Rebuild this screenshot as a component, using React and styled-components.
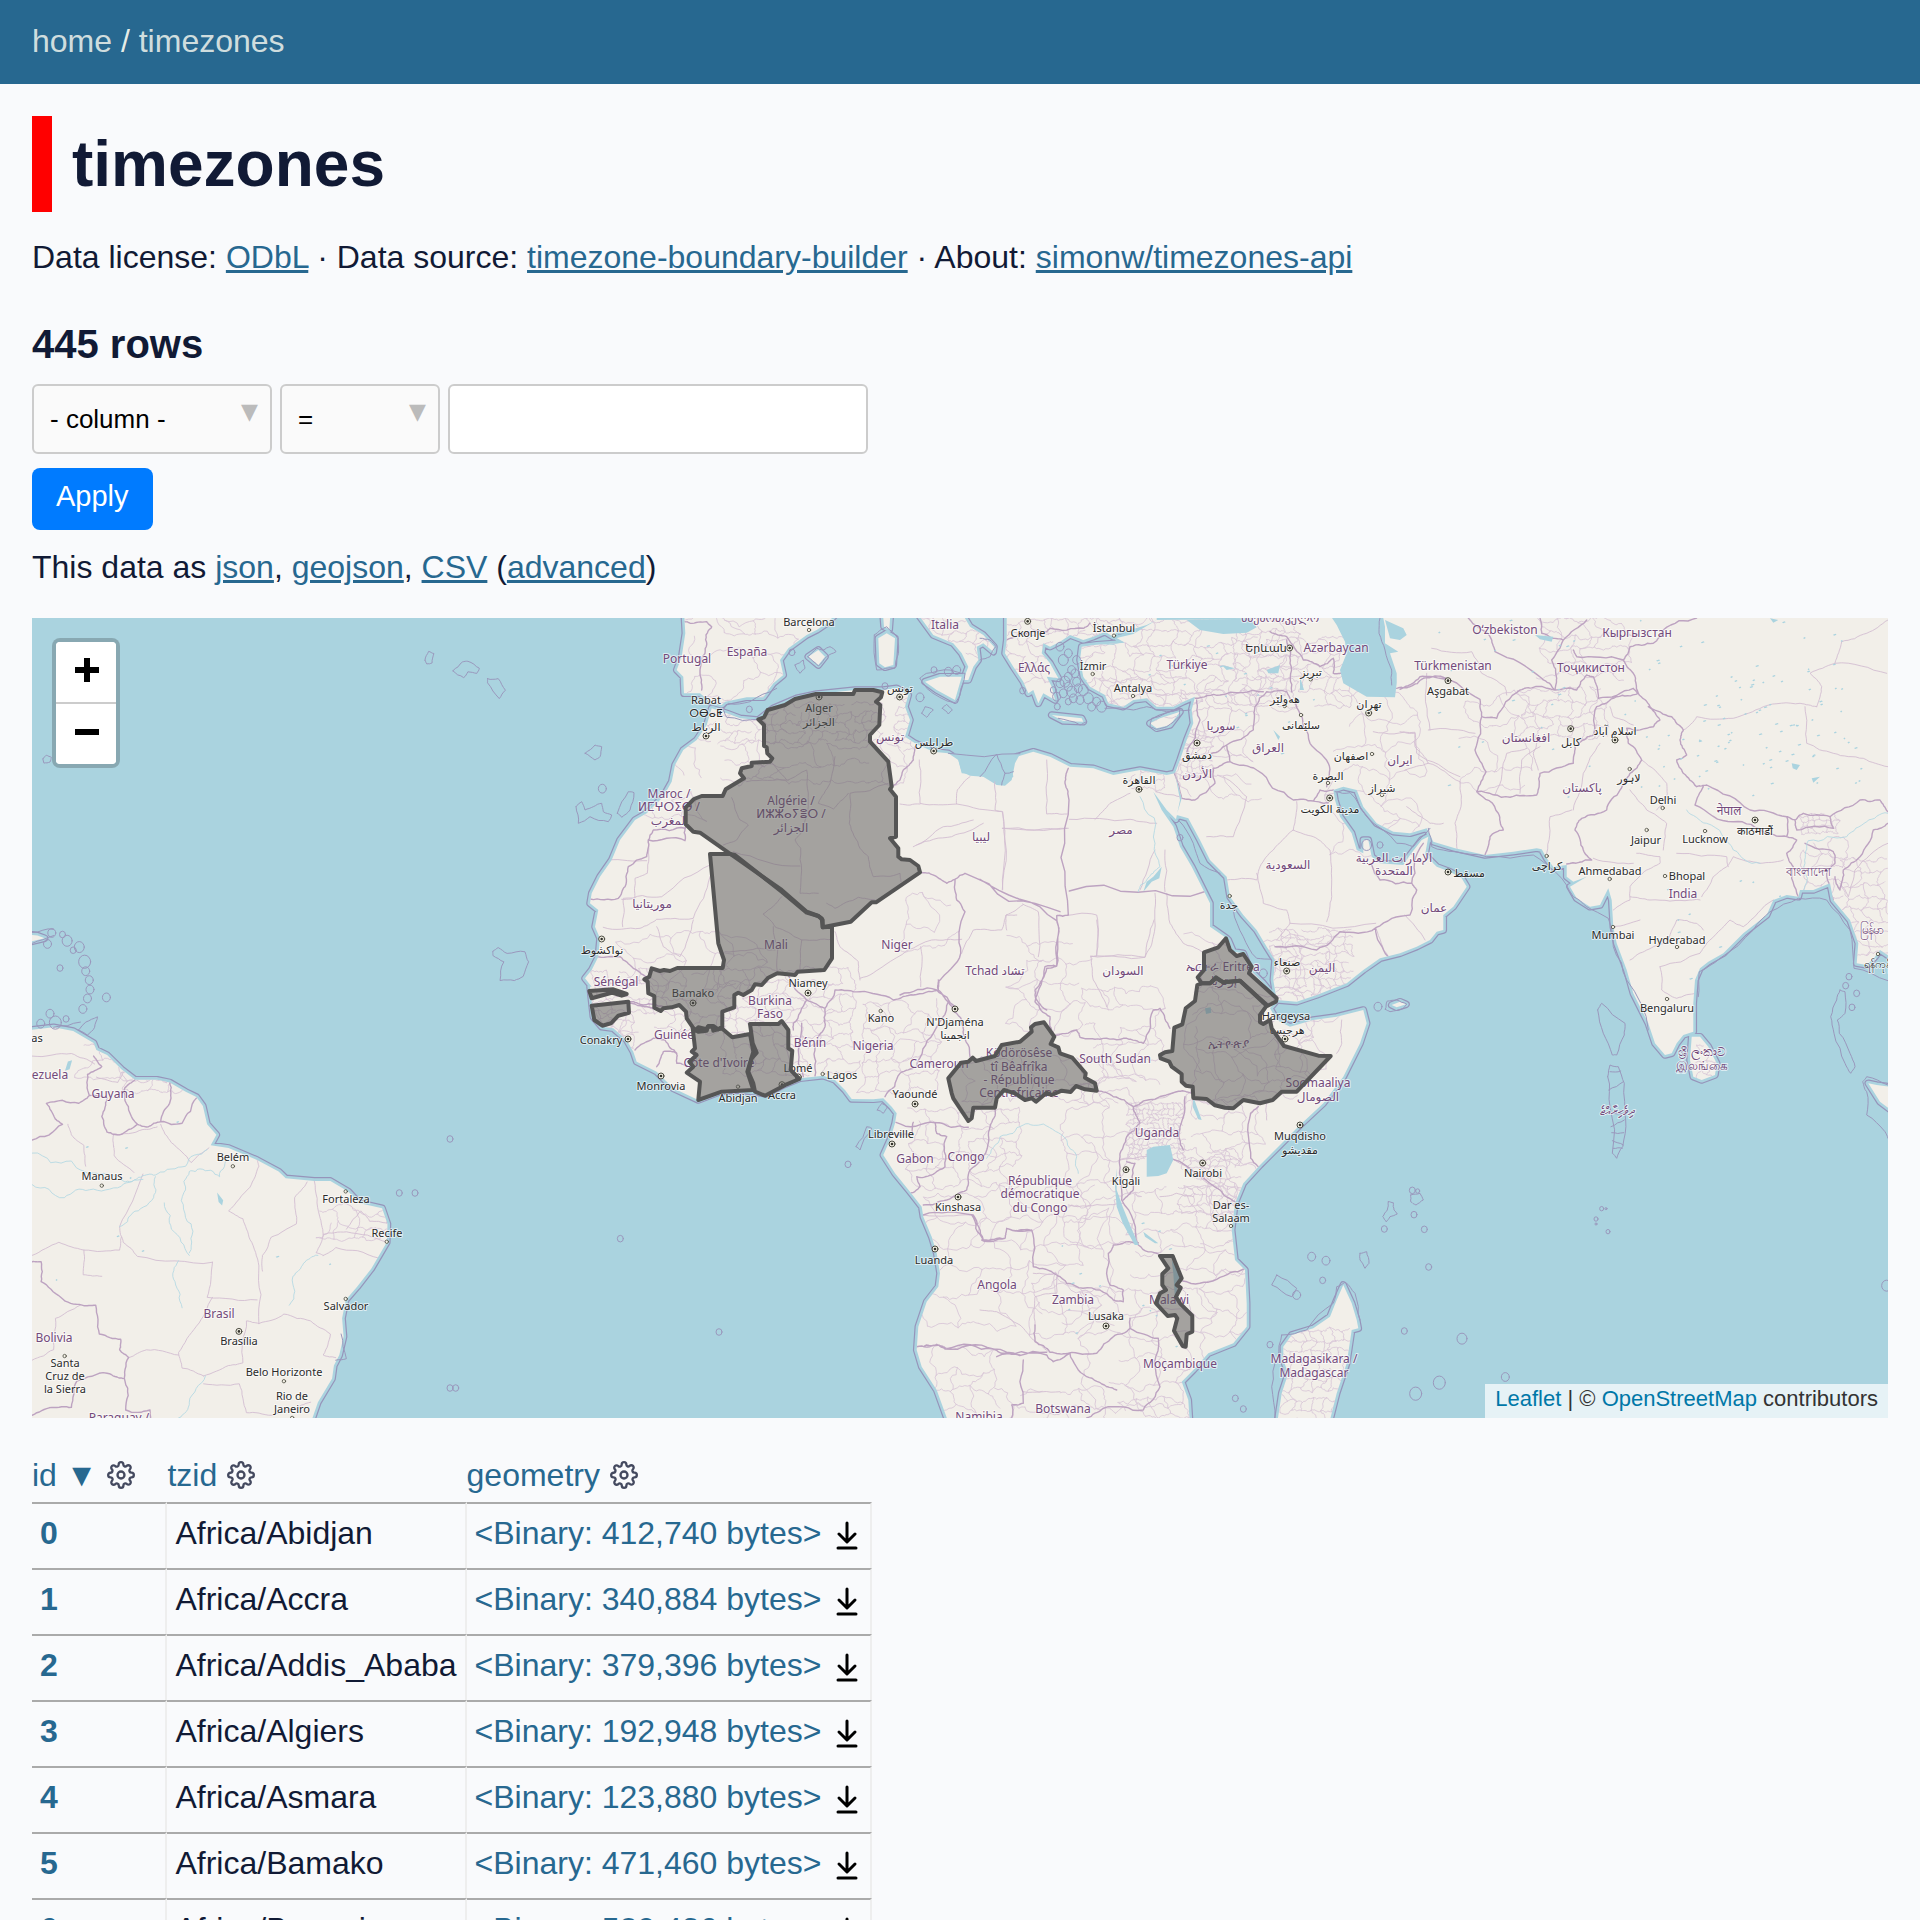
import React from 'react';
import styled, { createGlobalStyle } from 'styled-components';

const GlobalStyle = createGlobalStyle`
  *, *::before, *::after { box-sizing: border-box; }
  html { scrollbar-width: none; }
  body {
    margin: 0;
    background: #f9fafc;
    color: #111a35;
    font-family: "Liberation Sans", Arial, sans-serif;
    font-size: 32px;
    line-height: 48px;
  }
`;

/* ---------- map geometry ---------- */

// Survey sheets: origin on the map plane and units per pixel.
const SHEETS = {
  A: [0, 600, 2.8, 1.9073],
  B: [540, 610, 3, 3],
  C: [540, 920, 3, 3],
  D: [980, 610, 3, 3],
  E: [900, 920, 3, 3],
  F: [1400, 610, 3, 3],
  G: [1380, 920, 3, 3],
};

const place = (sheet, x, y) => {
  const [ox, oy, sx, sy] = SHEETS[sheet];
  return [ox + x / sx, oy + y / sy];
};

const points = (sheet, text) =>
  text.trim().split(/\s+/).map((pair) => {
    const [x, y] = pair.split(',').map(Number);
    return place(sheet, x, y);
  });

const toPath = (list, closed) =>
  'M' + list.map(([x, y]) => `${x.toFixed(1)},${y.toFixed(1)}`).join('L') + (closed ? 'Z' : '');

const shape = (...parts) =>
  toPath(parts.flatMap(([sheet, text]) => points(sheet, text)), true);

const noise = (a, b) => {
  const n = Math.sin(a * 12.9898 + b * 78.233) * 43758.5453;
  return n - Math.floor(n) - 0.5;
};

// Midpoint displacement, so that borders follow a natural, uneven line.
const roughen = (list, amount, depth) => {
  let line = list;
  for (let pass = 0; pass < depth; pass += 1) {
    const next = [line[0]];
    for (let i = 1; i < line.length; i += 1) {
      const [x0, y0] = line[i - 1];
      const [x1, y1] = line[i];
      const shift = noise(x0 + y1, y0 + x1) * amount;
      next.push([(x0 + x1) / 2 - (y1 - y0) * shift, (y0 + y1) / 2 + (x1 - x0) * shift]);
      next.push(line[i]);
    }
    line = next;
  }
  return line;
};

// Irregular province cells over a rectangle.
const provinces = ([x, y, w, h, size]) => {
  const cols = Math.round(w / size);
  const rows = Math.round(h / size);
  const node = (r, c) => [
    x + (c + (r % 2 ? 0.5 : 0)) * size + noise(r + x, c + y) * size * 0.6,
    y + r * size + noise(c + x + 7, r + y + 3) * size * 0.6,
  ];
  const parts = [];
  for (let r = 0; r <= rows; r += 1) {
    for (let c = 0; c <= cols; c += 1) {
      if (c < cols && noise(r * 3 + x, c * 5 + y) > -0.4) {
        parts.push(toPath(roughen([node(r, c), node(r, c + 1)], 0.45, 3)));
      }
      if (r < rows && noise(r * 7 + y, c * 2 + x) > -0.2) {
        parts.push(toPath(roughen([node(r, c), node(r + 1, c)], 0.45, 3)));
      }
    }
  }
  return parts.join('');
};

const LAND = [
  shape(['A', '60,822 150,815 205,822 262,845 270,858 300,868 340,895 378,915 440,915 475,920 520,938 550,948 568,965 580,1000 606,1020 590,1040 640,1045 720,1068 780,1090 800,1103 880,1108 925,1108 975,1128 1005,1150 1070,1160 1085,1190 1083,1225 1040,1275 1000,1310 968,1335 958,1370 962,1405 950,1440 935,1460 930,1485 890,1530 860,1590 60,1590']),
  shape(['B', '432,0 436,70 425,140 410,180 430,200 432,250 480,250 510,275 545,285 555,275 620,262 670,262 700,220 730,195 720,150 745,115 800,75 830,60 860,40 900,0']),
  shape(['B', '1015,85 1040,70 1065,85 1060,165 1035,172 1018,160']),
  shape(['B', '1028,0 1052,0 1048,58 1032,50']),
  shape(['B', '1125,0 1180,75 1240,100 1265,130 1285,170 1270,210 1285,210 1300,170 1315,150 1310,110 1330,100 1360,125 1362,110 1330,75 1290,50 1260,0']),
  shape(['B', '1155,215 1200,200 1265,200 1245,270 1190,240']),
  shape(['B', '805,140 835,120 855,140 835,165']),
  shape(['D', '80,0 80,90 75,130 100,170 130,215 145,250 160,240 175,280 190,250 225,270 215,230 200,200 235,205 210,160 185,130 190,100 210,110 240,95 270,75 310,90 340,80 375,65 400,80 410,66 450,60 500,45 530,30 530,0']),
  shape(
    ['D', '530,30 460,72 410,84 435,98 350,104 305,110 300,150 310,200 330,230 375,255 385,280 430,290 460,270 500,265 530,290 580,290 610,275 645,260 635,300 640,340 620,390 600,450 585,490 605,565 590,615 625,625 660,690 690,750 740,800 750,860 790,915 830,960 860,1010 885,1050 880,1110 890,1170 950,1175 1010,1155 1100,1120 1150,1080 1200,1045 1260,1030 1310,1010 1350,990 1370,965 1390,960 1390,915 1420,890 1460,830 1445,805 1410,785 1370,770 1335,735 1345,680 1325,690 1290,735 1270,765 1200,760 1175,740 1165,690 1150,690 1150,730 1130,720 1115,670 1080,620 1065,570 1060,540 1090,530 1130,540 1150,590 1190,640 1240,665 1290,670 1340,655 1360,695'],
    ['F', '165,715 255,735 340,725 410,715 425,718 440,745 460,770 500,765 500,800 520,815 560,800 510,830 530,865 570,890 600,885 625,835 635,870 640,950 650,1000 680,1080 700,1150'],
    ['G', '765,230 805,310 825,370 855,405 875,400 890,370 910,345 940,335 940,250 945,180 960,145 985,125'],
    ['F', '970,1030 1030,970 1100,915 1120,870 1160,855 1195,860 1200,840 1240,840 1290,820 1300,870 1350,930 1375,1000 1370,1060 1400,1065 1425,1040 1440,1020 1500,1060 1500,0'],
  ),
  shape(
    ['B', '515,295 500,345 470,390 430,420 405,465 395,515 370,560 320,610 285,630 240,690 215,750 180,800 155,850 150,880 175,900 165,950 180,985 175,1040 155,1080 135,1105 155,1130'],
    ['C', '150,200 160,290 185,320 220,325 260,360 280,395 290,425 350,455 400,505 475,540 540,515 590,510 640,515 680,522 730,495 780,475 850,467 885,480 915,510 935,537 1000,538 1030,535 1055,560 1070,580 1065,610 1050,660 1030,705 1065,760 1110,815 1145,860 1150,890 1175,950 1190,1000 1200,1060 1195,1100 1160,1145 1135,1220 1130,1290 1145,1340 1190,1410 1230,1520'],
    ['E', '870,1520 865,1440 845,1385 880,1350 925,1300 1000,1270 1040,1220 1040,1150 1035,1050 1005,1020 995,930 1005,850 1030,790 1080,735 1200,615 1270,550 1330,470 1380,370 1400,310 1390,270 1310,290 1240,300 1170,320 1130,300 1110,265 1130,240 1090,190 1050,150 1030,100 1000,95 985,60'],
    ['D', '740,985 690,950 690,880 660,820 635,770 600,710 580,650 545,600 520,545 560,600 588,628 600,570 585,490 560,495 480,480 400,495 340,475 270,470 210,440 160,425 110,440 95,470 100,500 70,525 0,495'],
    ['B', '1265,490 1255,450 1225,430 1180,425 1125,400 1095,380 1110,330 1095,290 1105,255 1070,235 1030,240 945,240 830,252 770,265 700,295 655,330 600,325 560,310'],
  ),
  shape(['G', '935,350 960,350 985,380 1010,430 1005,465 965,480 940,470 930,420']),
  shape(['E', '1330,1095 1355,1150 1370,1200 1375,1225 1355,1230 1340,1330 1310,1420 1285,1520 1130,1520 1145,1420 1165,1360 1150,1320 1150,1280 1175,1245 1240,1225 1290,1190 1310,1140']),
  shape(['D', '510,340 540,325 600,305 570,345 530,355']),
  shape(['D', '215,315 305,325 310,335 250,333']),
  shape(['G', '35,255 60,245 78,253 50,262']),
  shape(['G', '1465,490 1490,495 1560,505 1560,590 1500,545']),
  shape(['A', '60,636 105,640 125,645 60,656']),
].join('');

const WATER = [
  shape(['D', '1040,0 1070,45 1095,95 1100,130 1080,180 1090,220 1160,260 1245,262 1250,220 1250,190 1230,130 1255,125 1215,100 1215,50 1205,0']),
  shape(['D', '1215,30 1270,55 1280,75 1260,90 1230,85']),
  shape(['D', '535,0 535,30 620,30 660,60 730,72 800,68 830,52 790,0']),
  shape(['D', '340,92 400,84 430,95 400,104 345,102']),
  shape(['E', '740,690 760,680 810,675 820,720 800,760 775,768 740,770']),
  shape(['E', '650,745 650,810 668,860 690,915 716,975 704,975 668,910 650,860 645,800']),
  shape(['E', '730,935 775,970 765,970 735,950']),
  shape(['E', '815,1020 845,1075 830,1095 835,1140 825,1140 820,1060']),
  shape(['E', '880,530 905,600 895,598 878,560']),
  shape(['E', '915,265 932,262 934,278 918,282']),
  shape(['D', '860,180 900,165 895,190 865,190']),
  shape(['D', '960,200 972,240 960,240']),
  shape(['D', '725,165 765,175 740,180']),
  shape(['D', '520,800 545,770 538,805 515,815 490,845 500,815']),
  shape(['F', '405,75 460,80 455,95 420,88']),
  shape(['F', '1110,25 1135,30 1120,38']),
  shape(['F', '1175,460 1200,465 1190,480 1178,475']),
  shape(['F', '1235,505 1260,500 1240,518']),
  shape(['A', '190,880 202,878 195,895 182,898']),
  shape(['A', '608,1130 625,1145 622,1155 612,1148']),
  shape(['D', '880,360 900,380 895,390']),
].join('');

const GULF = shape(['B', '1240,430 1440,431 1425,460 1415,510 1395,527 1370,525 1330,500 1290,497 1265,485 1255,450']);

const RIVERS = [
  ['A', '580,1048 520,1080 440,1095 400,1098 350,1110 280,1095 200,1070 90,1055'],
  ['A', '400,1105 340,1118 250,1125 180,1140 90,1115'],
  ['A', '640,1060 615,1100 560,1085 530,1090 515,1130 535,1190 530,1245'],
  ['A', '460,1150 480,1200 530,1250'],
  ['A', '435,1100 430,1140 370,1170 335,1195'],
  ['A', '890,1250 850,1265 820,1290 810,1345'],
  ['A', '575,1480 530,1530 500,1560'],
  ['A', '500,1260 490,1300 510,1350'],
  ['E', '260,715 300,650 370,615 430,612 500,660 530,710 535,760'],
  ['D', '475,845 500,810 540,770 525,700 480,560'],
  ['F', '1464,610 1400,635 1340,680 1225,692 1215,760 1215,850'],
  ['F', '860,600 920,640 1000,720 1080,760'],
].map(([s, t]) => toPath(roughen(points(s, t), 0.3, 3))).join('');

const LAKES = [
  [1430, 620, 440, 180, 60], [1640, 700, 220, 90, 60], [1690, 670, 150, 20, 8],
  [1220, 680, 120, 90, 8], [1080, 640, 180, 60, 14], [50, 900, 300, 450, 22],
  [1060, 1220, 120, 140, 14], [1640, 860, 140, 120, 12],
].flatMap(([x, y, w, h, n]) =>
  Array.from({ length: n }, (_, i) => {
    const cx = x + (noise(i, x) + 0.5) * w;
    const cy = y + (noise(y, i + 3) + 0.5) * h;
    const r = 1 + (noise(i, i + 9) + 0.5) * 2;
    return `M${cx.toFixed(1)},${cy.toFixed(1)}l${r.toFixed(1)},-1l1,1l-${r.toFixed(1)},1Z`;
  })).join('');

const STATE_LINES = [
  ['B', '325,692 322,790 285,805 285,865 245,868'],
  ['B', '205,750 320,752'], ['B', '510,765 365,860 250,865 248,950'],
  ['B', '190,952 300,955 350,928 460,925 510,800'], ['B', '460,930 420,1040 370,1010 350,950'],
  ['B', '1138,450 1140,580 1250,582 1252,540 1290,500'], ['B', '1080,582 1140,582'],
  ['B', '1250,582 1387,605 1387,840'], ['B', '1387,655 1580,655'], ['B', '1120,710 1210,650 1300,630'],
  ['B', '1130,705 1235,680 1330,640'], ['B', '885,965 900,1010 955,1055 960,1110'],
  ['B', '960,1105 1035,1065 1175,990 1265,988'], ['B', '1142,1010 1142,1130'],
  ['B', '1265,1030 1300,960 1385,960 1398,915 1430,915'],
  ['B', '745,510 620,515 605,505'], ['B', '745,510 800,480 805,590 790,660 765,690 782,715 780,850 835,850'],
  ['B', '780,768 580,725'], ['B', '1045,520 930,550 928,640 960,715 985,740 1000,800 1080,790 1083,815'],
  ['B', '575,563 600,630 625,645 590,690 550,705'], ['B', '690,450 740,510'], ['B', '885,440 870,520 835,580 880,597 925,550'],
  ['B', '670,912 725,860'], ['B', '670,912 705,950 740,965 785,990 876,988'], ['B', '700,950 712,1085'],
  ['B', '785,990 780,1080'], ['B', '555,1025 650,1015 705,1020'], ['B', '860,880 885,895 955,862 1005,870'],
  ['D', '45,500 45,600 68,605 68,838'], ['D', '68,655 265,655'], ['D', '200,450 200,612 262,612'],
  ['D', '268,628 450,628 530,640'], ['D', '345,628 390,580 450,550'], ['D', '555,720 555,845'],
  ['D', '527,545 600,560'], ['D', '525,720 480,840'], ['D', '128,882 175,905 175,1040'], ['D', '80,960 78,915 128,885'],
  ['D', '232,915 350,915 350,1035'], ['D', '333,1040 495,1042 520,980 525,850'], ['D', '333,1040 340,1110 380,1190'],
  ['D', '560,850 570,940 610,1000 665,1025'], ['D', '930,940 1187,940'], ['D', '1040,935 1055,860 1050,720 1000,680 940,660'],
  ['D', '940,660 880,720 840,770 830,810 740,810'], ['D', '680,680 760,680 800,560 730,500'],
  ['D', '950,575 940,660'], ['D', '830,790 850,880 920,900 930,940 890,990'],
  ['D', '1187,955 1225,1040'], ['D', '1275,915 1335,990'], ['D', '1180,365 1305,367 1310,430 1440,500'],
  ['F', '0,365 45,370 45,410 85,460 180,515 180,600 165,640 172,720'], ['F', '15,480 85,460'],
  ['F', '20,590 90,640 130,640'], ['F', '85,360 225,370'], ['F', '80,190 90,360'],
  ['F', '95,115 215,125 245,190 315,230 320,255'], ['F', '285,555 320,430 380,415'], ['F', '360,550 365,450 420,410'],
  ['F', '410,400 400,430 415,480'], ['F', '600,400 550,490 520,600'], ['F', '515,600 450,620 440,730'],
  ['F', '1464,30 1400,70 1325,95 1305,160 1230,190 1265,230 1250,290'],
  ['F', '1305,160 1460,190'], ['F', '850,360 890,320 1000,325 1090,290 1200,280 1250,290'],
  ['F', '1215,290 1220,400 1300,430 1390,445 1464,470'],
  ['F', '640,950 720,930'], ['F', '690,860 750,870 870,870 900,870'], ['F', '905,860 940,800 980,770 1000,740 1080,760 1150,750'],
  ['F', '640,900 690,870 690,830 740,780 780,760 780,740 710,730'], ['F', '690,540 740,600 800,640 790,720'],
  ['F', '580,745 700,760'], ['F', '830,730 980,740 985,770'], ['F', '780,1070 900,1030 920,1000'],
  ['F', '780,1070 785,1140 830,1165 890,1150'], ['F', '690,1050 740,1020 800,1000 830,930 890,940 910,960'],
  ['F', '920,1000 990,930 1030,950 1120,870'], ['F', '725,450 800,520 800,560 770,600'],
  ['F', '1320,820 1345,860 1365,780 1464,700'], ['F', '630,290 640,320 700,345'],
  ['A', '400,1095 335,1195 345,1225 385,1252 595,1263'], ['A', '90,1250 165,1225 235,1240 335,1240 340,1215'],
  ['A', '235,1240 233,1287 285,1290'], ['A', '240,1080 235,1040 200,1020 190,1000'], ['A', '318,1042 318,1020 400,1010 440,1005'],
  ['A', '318,1042 320,1060 375,1092'], ['A', '450,1000 480,1035 535,1073 585,1045'],
  ['A', '595,1263 580,1330 720,1335'], ['A', '720,1065 725,1080 700,1120 640,1165 680,1180 700,1220 725,1270 725,1380'],
  ['A', '880,1108 895,1175 905,1210 885,1245 905,1250'], ['A', '860,1110 825,1140 830,1190 760,1215 735,1250 735,1280'],
  ['A', '905,1210 970,1205 1085,1225'], ['A', '970,1200 1010,1165 1035,1185 1085,1188'], ['A', '905,1250 940,1235 1060,1255'],
  ['A', '725,1380 795,1362 870,1375 925,1400 905,1440 940,1445'], ['A', '595,1330 550,1385 500,1435 510,1465 570,1480'],
  ['A', '570,1480 640,1460 680,1455 690,1375 725,1380'], ['A', '360,1445 410,1430 500,1440'], ['A', '570,1495 670,1495 690,1550 760,1555 820,1545 870,1530'],
  ['A', '90,870 200,865 265,885'], ['A', '90,1450 150,1430 155,1370 225,1345'], ['A', '270,910 330,920 345,900'],
  ['E', '590,0 590,108 572,110'], ['E', '572,108 735,112 762,0'], ['E', '505,855 620,855 670,850'],
  ['E', '1050,580 1075,560'], ['E', '1325,300 1325,370 1310,400'], ['E', '1100,550 1100,600'],
  ['E', '70,885 215,885'], ['E', '240,1170 290,1175 360,1215 400,1260 445,1295'], ['E', '470,1070 470,1120 405,1130 405,1215'],
  ['E', '370,1415 480,1415'], ['E', '470,1060 400,1060'], ['E', '690,1195 790,1170'], ['E', '780,830 830,820 880,830'],
  ['E', '660,720 820,718 960,810'], ['E', '830,515 760,540 700,560'],
].map(([s, t]) => toPath(roughen(points(s, t), 0.12, 3))).join('');

const PROVINCES = [
  [700, 705, 180, 36, 9], [690, 615, 100, 80, 20], [560, 750, 140, 60, 22], [720, 745, 180, 30, 18],
  [895, 700, 16, 50, 7], [900, 620, 100, 40, 12], [1005, 620, 70, 60, 12], [1075, 620, 220, 80, 12],
  [1180, 690, 70, 110, 22], [1230, 640, 120, 60, 13], [1330, 695, 90, 160, 26], [1180, 730, 30, 50, 6],
  [1130, 765, 30, 20, 8], [1520, 690, 80, 50, 12], [1540, 620, 90, 60, 14],
  [590, 970, 140, 60, 15], [570, 1010, 60, 60, 12], [720, 970, 130, 110, 13], [620, 935, 120, 60, 26],
  [860, 1000, 80, 90, 15], [900, 900, 60, 60, 26], [910, 1110, 110, 80, 15], [960, 1060, 150, 30, 20],
  [1010, 940, 60, 90, 22], [1080, 990, 80, 90, 18], [920, 1190, 170, 140, 26], [1060, 1090, 60, 150, 22],
  [1127, 1104, 54, 56, 5], [1190, 1100, 60, 60, 16], [1180, 1150, 50, 60, 9], [1130, 1190, 110, 80, 20],
  [1080, 1290, 110, 110, 24], [1030, 1280, 50, 60, 26], [930, 1350, 60, 60, 20], [1000, 1390, 100, 30, 20],
  [1280, 1330, 70, 90, 10], [1190, 940, 130, 120, 26], [1270, 930, 80, 70, 8],
  [1205, 1160, 40, 200, 22], [1800, 815, 34, 16, 6], [1800, 840, 40, 60, 14], [1840, 860, 48, 100, 12],
  [1695, 1045, 30, 40, 9], [1120, 1400, 60, 20, 15], [465, 1060, 60, 20, 15],
  [120, 1070, 60, 20, 10], [320, 1210, 70, 30, 15], [80, 1045, 60, 30, 18], [1100, 680, 90, 30, 18],
  [1460, 700, 70, 80, 22], [1190, 1010, 110, 90, 22],
].map(provinces).join('');

const COUNTRY_LINES = [
  ['B', '432,34 450,40 500,35 515,50 498,75 495,130 480,180 485,240'],
  ['B', '325,690 435,692 437,645'], ['B', '325,690 340,660 435,655'],
  ['B', '325,690 320,740 265,770 255,830 235,865 150,867'], ['B', '165,1040 240,1040 280,1075 325,1110'],
  ['B', '1125,410 1120,450 1090,480 1080,510 1055,530'], ['B', '1142,787 1190,800 1220,820 1245,808 1275,790 1560,905'],
  ['B', '1245,808 1250,870 1275,905 1262,1030 1195,1115 1195,1140'],
  ['C', '745,165 800,240 855,265 885,210 960,215 1060,240 1120,225 1195,210 1195,180'],
  ['C', '855,265 855,320 825,380 825,468'], ['C', '800,240 760,310 760,330'], ['C', '785,310 790,470'],
  ['C', '1195,210 1225,245 1180,340 1130,440 1080,460 1035,530'], ['C', '1225,245 1265,300 1270,340 1290,410'],
  ['C', '265,250 340,265'], ['C', '370,260 310,255 270,245'], ['C', '285,390 340,355 375,360 410,400 410,430 440,440'],
  ['C', '410,400 370,395 350,440'], ['C', '1068,607 1185,608 1285,622'], ['C', '1120,607 1120,645 1070,645'],
  ['C', '1185,608 1190,640 1220,650 1215,740 1175,765 1130,770 1140,800 1110,820'],
  ['C', '1365,565 1350,620 1340,690 1290,750 1280,810 1220,840 1150,855'], ['C', '1150,885 1300,885 1330,960 1395,955 1400,925 1470,930'],
  ['C', '1130,1280 1190,1273 1215,1287 1360,1287 1390,1300 1440,1305'],
  ['D', '265,475 255,520 267,570 265,915 230,917 230,1068 200,1075 165,1140 170,1170 200,1200'],
  ['D', '0,808 230,932'], ['D', '268,843 680,843'], ['D', '583,490 605,565'], ['D', '605,565 645,570 705,520 700,475 750,455 740,405'],
  ['D', '695,430 740,405 820,360 825,290 860,245 920,245'], ['D', '645,265 720,255 850,245'],
  ['D', '750,455 830,480 940,570 1000,573 1045,578'], ['D', '1000,573 1020,540 1060,540'],
  ['D', '920,245 955,300 990,400 1045,460 1040,530'], ['D', '920,90 930,160 935,245'],
  ['D', '870,65 920,80 970,150 1020,170 1060,145'], ['D', '1060,145 1060,190 1085,190'],
  ['D', '885,1010 1010,1020 1080,965 1187,953 1290,915 1310,840 1295,820 1200,810 1175,765'],
  ['D', '1295,820 1330,700'], ['D', '1187,953 1225,1040'], ['D', '650,270 660,330 620,430'],
  ['D', '1250,235 1290,230 1330,205 1400,205'],
  ['D', '80,90 130,70 200,65 210,55 310,55 330,40'],
  ['F', '0,238 60,200 120,205 240,268 245,320 290,325 360,240 400,232 465,240'],
  ['F', '245,320 225,420 258,485 230,545 295,610 310,660 270,680 255,735'],
  ['F', '230,545 330,562 410,555 420,490 520,460 525,410 550,390 580,375 590,290 650,260 715,250'],
  ['F', '205,24 270,80 285,125 425,205 465,240 470,205 455,150 490,90 425,70 420,24'],
  ['F', '490,90 560,30'], ['F', '520,120 530,140 670,150 690,110 760,100 790,60 890,24'],
  ['F', '465,240 530,240 560,195 580,200 595,265 700,235 715,250 700,190 670,150'],
  ['F', '715,250 750,290 815,320 850,360 840,390 860,435 830,450 850,490 890,530 920,525 1050,600 1160,620'],
  ['F', '745,290 780,330 760,350 680,355 685,400 725,450 690,490 660,540 620,600 545,625 525,660 550,720 575,750 500,762'],
  ['F', '910,530 885,585 1000,635 1100,670 1160,680 1160,620 1185,630'],
  ['F', '1185,630 1210,610 1290,620 1300,655 1190,660 1185,630'], ['F', '1290,620 1380,570 1440,570 1464,605'],
  ['F', '1160,680 1190,690 1160,730 1180,770 1195,860'], ['F', '1215,700 1300,725 1305,760 1280,790 1300,870'],
  ['F', '1464,640 1420,660 1380,740 1330,780 1320,840 1305,800'],
  ['A', '262,870 285,890 245,905 250,945 220,960 130,960 155,990 175,1000 90,1030'],
  ['A', '250,945 300,950 285,985 300,1015 335,1020 385,1000 350,955 350,930 378,915'],
  ['A', '385,1000 415,1005 450,995 475,960 475,920'], ['A', '450,995 510,998 550,950'],
  ['A', '90,1262 115,1262 115,1300 170,1330 230,1345 268,1345 278,1400 338,1410 335,1430 360,1445 350,1490 352,1545 420,1545 420,1564'],
  ['A', '90,1555 145,1540 200,1540 215,1490 300,1475 345,1485'],
  ['E', '470,0 470,138 435,140 405,245 450,290 460,345'], ['E', '460,345 530,330 540,352 600,358 680,355 730,370 760,270 780,265 810,325'],
  ['E', '590,510 640,530 700,560 830,515 875,520'], ['E', '700,560 720,610 680,650 660,710 665,840 715,975 780,1005'],
  ['E', '848,1083 950,1078 1035,1045'], ['E', '820,718 960,810 1005,845'], ['E', '1075,560 1052,580 1052,715 1075,740'],
  ['E', '245,960 315,955 320,925 395,930 400,1040 470,1065 500,1090 600,1110 640,1140 670,1145 670,1110 630,1095 625,1000 640,975 715,968'],
  ['E', '215,885 250,960'], ['E', '405,1215 405,1265 450,1297 505,1300 590,1300 640,1250 690,1225 690,1195'],
  ['E', '50,1280 110,1275 140,1287 280,1287 440,1297'], ['E', '290,1310 440,1305 460,1325 510,1300'],
  ['E', '370,1320 370,1450 335,1455 335,1494'], ['E', '510,1300 560,1370 620,1400 650,1410'],
  ['E', '690,1225 775,1255 780,1400 730,1470 610,1465 560,1494'], ['E', '0,225 110,210 165,260'],
  ['E', '670,840 700,810 705,730 680,725'], ['E', '855,530 840,620 850,690'],
].map(([s, t]) => toPath(roughen(points(s, t), 0.2, 3))).join('');

const SEA_LINES = [
  ['A', '90,634 150,628'], ['A', '90,655 150,640'], ['A', '150,815 225,805'],
  ['B', '1225,430 1440,431'], ['B', '550,300 565,280 630,275 710,235'], ['B', '550,300 560,322 655,328'],
  ['B', '1320,500 1370,432 1395,490 1420,485'], ['B', '1395,490 1385,525'],
  ['D', '0,85 30,90 48,110 30,140 0,150'], ['D', '375,295 460,300 500,290 560,305 630,300'],
  ['D', '595,630 640,700 660,760 720,790'], ['D', '760,900 790,980 830,1045 875,1048'],
  ['D', '1065,545 1110,548 1160,620 1250,700 1300,710 1350,655'],
  ['D', '1200,24 1197,70 1215,120 1235,180 1235,225'],
  ['F', '85,655 95,710 165,725 260,740 400,735 470,790 520,860 560,890 625,925 640,1010 680,1110 745,1260'],
  ['F', '895,1160 898,1085 960,1045 1060,960 1110,905 1195,865 1280,870 1350,960 1362,1075 1464,1112'],
  ['G', '653,270 665,250 735,310 733,345 710,405 697,405 670,340 653,270'],
  ['G', '683,470 690,435 715,440 733,490 737,600 728,680 710,715 697,700 690,560 683,470'],
  ['G', '690,455 722,453'], ['G', '686,510 730,485'], ['G', '688,580 735,580'], ['G', '693,620 733,600'], ['G', '695,638 731,638'], ['G', '697,662 730,675'], ['G', '700,685 727,685'],
  ['G', '1380,210 1395,215 1395,280 1372,300 1378,340 1410,400 1425,440 1412,460 1395,430 1362,340 1352,290 1370,240 1380,210'],
  ['G', '1524,655 1515,635 1460,585 1460,515 1448,485 1460,470 1524,495'],
  ['G', '16,268 22,243 50,240 80,252 70,265 30,275 16,268'],
  ['G', '25,845 40,848 42,870 52,882 30,890 18,905 8,890 22,870 25,845'],
  ['G', '92,825 120,820 130,840 108,855 92,845 92,825'],
  ['E', '1130,1065 1190,1105 1175,1130 1115,1095 1130,1065'],
  ['E', '1380,1000 1400,995 1407,1030 1395,1045 1380,1020 1380,1000'],
  ['E', '1145,1245 1135,1310 1115,1400 1125,1494'], ['E', '1145,1245 1220,1230 1300,1150 1310,1100 1335,1087 1365,1120 1380,1200'],
  ['C', '948,680 980,620 995,625 960,690 948,680'], ['C', '1012,570 1025,550 1042,560 1030,580 1012,570'],
  ['B', '135,430 165,405 185,410 180,440 165,450 135,430'], ['B', '232,610 265,545 282,548 270,600 245,622 232,610'],
  ['B', '108,590 125,575 135,600 160,590 185,580 190,605 215,615 205,635 150,620 115,640 108,590'],
  ['B', '765,165 790,150 795,175 780,190 765,165'], ['B', '803,140 830,115 850,120 870,110 888,125 860,140 835,168 803,140'],
  ['B', '1003,75 1040,50 1073,85 1065,175 1010,180 1003,75'],
  ['B', '1140,205 1160,190 1230,180 1275,190 1260,255 1245,278 1160,235 1140,205'],
  ['B', '1145,310 1155,290 1180,300 1160,322 1145,310'], ['B', '1207,295 1220,283 1237,300 1225,312 1207,295'],
  ['A', '1190,115 1200,98 1215,102 1210,120 1195,122 1190,115'],
  ['A', '1268,135 1295,118 1310,117 1342,130 1335,140 1310,137 1298,148 1268,135'],
  ['A', '1365,150 1395,150 1415,172 1398,188 1365,158 1365,150'],
  ['A', '1380,670 1395,663 1420,674 1470,671 1480,690 1465,718 1440,726 1400,726 1411,690 1380,678 1380,670'],
  ['A', '220,820 240,805 273,795 265,815 245,830 220,820'],
  ['A', '120,303 130,296 144,300 140,309 123,311 120,303'],
  ['A', '955,1400 970,1447 940,1450'],
  ['D', '235,325 300,345 320,335'], ['D', '510,350 515,325 600,298 600,318 560,350 530,358 510,350'],
].map(([s, t]) => toPath(roughen(points(s, t), 0.15, 2))).join('');

const ISLETS = [
  ['A', 145, 635, 4], ['A', 133, 656, 4], ['A', 175, 638, 3], ['A', 188, 650, 5], ['A', 205, 668, 3], ['A', 222, 662, 5],
  ['A', 237, 690, 6], ['A', 240, 708, 4], ['A', 250, 725, 4], ['A', 252, 743, 4], ['A', 245, 760, 4], ['A', 232, 780, 4],
  ['A', 298, 758, 4], ['A', 168, 702, 3], ['A', 140, 789, 4], ['A', 114, 808, 4], ['A', 185, 799, 3], ['A', 155, 806, 6],
  ['A', 1260, 1028, 3], ['A', 1118, 1131, 3], ['A', 1162, 1131, 3], ['A', 1260, 1503, 3], ['A', 1276, 1503, 3],
  ['B', 187, 536, 4], ['B', 628, 298, 3], ['B', 756, 127, 3], ['B', 1182, 180, 3], ['B', 1140, 262, 4], ['B', 1225, 185, 4], ['B', 1250, 180, 4], ['B', 1035, 228, 3],
  ['C', 241, 956, 3], ['C', 537, 1236, 3], ['C', 924, 733, 3],
  ['D', 1200, 705, 3], ['D', 1160, 705, 5], ['D', 600, 683, 3], ['D', 128, 242, 3], ['D', 232, 290, 3], ['D', 850, 1090, 4], ['D', 1194, 1190, 4],
  ['E', 1235, 1010, 4], ['E', 1278, 1022, 4], ['E', 1268, 1081, 3], ['E', 1190, 1125, 4], ['E', 1110, 1274, 3], ['E', 1006, 1435, 3], ['E', 1030, 1467, 3], ['E', 1453, 927, 3],
  ['G', 97, 811, 3], ['G', 113, 813, 2], ['G', 102, 884, 3], ['G', 133, 928, 3], ['G', 146, 1041, 3], ['G', 73, 1233, 3], ['G', 246, 1256, 5],
  ['G', 376, 1371, 4], ['G', 178, 1388, 6], ['G', 107, 1421, 6], ['G', 1407, 170, 3], ['G', 1397, 197, 3], ['G', 1430, 220, 3], ['G', 1416, 262, 3],
  ['G', 665, 866, 2], ['G', 678, 866, 1], ['G', 648, 897, 2], ['G', 648, 912, 1], ['G', 684, 935, 2], ['G', 1520, 1097, 5],
  ['D', 240, 220, 4], ['D', 265, 230, 4], ['D', 290, 215, 4], ['D', 250, 250, 4], ['D', 280, 265, 4], ['D', 310, 240, 5], ['D', 220, 240, 3],
  ['D', 265, 200, 4], ['D', 300, 270, 4], ['D', 335, 290, 4], ['D', 365, 290, 5], ['D', 250, 150, 5], ['D', 275, 180, 4], ['D', 240, 110, 4], ['D', 290, 150, 4],
  ['D', 255, 215, 5], ['D', 275, 245, 5], ['D', 295, 235, 4], ['D', 325, 265, 5], ['D', 285, 190, 4], ['D', 350, 275, 4], ['D', 230, 260, 4], ['D', 265, 275, 3], ['D', 265, 130, 4],
];

const ZONES = [
  ['Africa/Algiers', 'B', '945,240 1000,240 1027,247 1023,262 1008,275 1021,285 1018,345 990,375 990,395 1045,455 1055,530 1050,538 1068,560 1068,680 1050,685 1075,715 1075,740 1085,748 1110,750 1135,768 1140,787 1008,877 995,877 932,935 848,952 845,925 835,918 800,905 725,840 480,668 460,665 437,643 437,592 462,567 485,558 548,558 557,538 612,505 600,490 605,475 635,468 635,458 690,455 697,445 682,430 680,412 672,408 672,345 655,328 672,322 683,300 735,285 765,267 828,252 940,252'],
  ['Africa/Bamako', 'B', '510,732 570,732 585,735 725,845 800,908 835,918 848,930 848,952 876,950 876,1045 853,1080 773,1085 765,1095 712,1090 685,1103 665,1125 645,1123 635,1140 610,1155 595,1148 583,1155 583,1192 547,1205 547,1250 535,1258 520,1248 505,1248 500,1258 475,1252 465,1262 440,1225 438,1205 418,1185 395,1192 370,1195 362,1203 343,1193 343,1158 325,1150 323,1115 313,1108 328,1100 335,1075 360,1083 372,1080 390,1083 412,1074 548,1074 552,1050 535,1000'],
  ['Africa/Bissau', 'B', '155,1187 265,1175 267,1208 235,1217 213,1240 187,1247 163,1230'],
  ['Africa/Banjul', 'B', '148,1143 220,1138 260,1152 245,1157 215,1148 155,1165'],
  ['Africa/Abidjan', 'C', '458,325 475,335 500,332 503,320 518,320 520,332 545,325 577,352 630,342 640,395 622,455 640,510 545,515 475,540 480,485 440,458 460,440 448,425 470,405 455,395 465,385'],
  ['Africa/Accra', 'C', '630,312 715,312 725,303 745,330 745,385 757,392 752,450 778,477 740,493 675,527 645,515 640,490 625,455 635,415 650,398 638,370'],
  ['Africa/Bangui', 'E', '145,475 183,428 205,425 218,413 228,423 285,408 305,375 360,365 395,335 393,322 405,312 432,307 463,350 452,372 475,382 480,400 517,413 557,460 555,473 585,490 590,512 555,508 528,498 512,516 485,512 455,525 440,518 408,545 395,535 375,540 345,520 312,510 290,535 285,563 220,563 215,595 205,603 160,535 155,520'],
  ['Africa/Addis_Ababa', 'E', '905,190 930,190 948,175 970,187 1020,182 1100,257 1080,285 1080,307 1090,312 1110,300 1115,325 1152,378 1255,407 1292,408 1190,515 1145,515 1118,540 1080,550 1030,540 1000,565 975,563 945,556 920,537 880,534 878,500 858,497 845,485 845,462 815,440 808,425 782,415 780,405 795,397 817,393 823,323 847,313 857,265 885,243 892,195'],
  ['Africa/Asmara', 'E', '978,55 990,90 1010,108 1030,102 1055,140 1047,160 1130,235 1128,245 1103,257 1020,182 970,187 948,172 930,190 905,190 893,172 912,150 912,97 955,82'],
  ['Africa/Blantyre', 'E', '780,1008 818,1008 845,1075 830,1095 842,1103 828,1130 840,1150 877,1187 877,1235 860,1243 857,1280 848,1278 822,1232 832,1195 825,1185 803,1188 768,1150 780,1120 798,1110 787,1095 787,1062 805,1045'],
];

// [sheet, x, y, text] with the name centred on the point
const COUNTRIES = [
  ['A', 139, 906, 'ezuela'], ['A', 317, 942, 'Guyana'], ['A', 614, 1362, 'Brasil'], ['A', 152, 1407, 'Bolivia'], ['A', 333, 1560, 'Paraguay /'],
  ['B', 440, 148, 'Portugal'], ['B', 620, 127, 'España'], ['B', 1216, 45, 'Italia'], ['B', 388, 552, 'Maroc /'], ['B', 388, 592, 'ⵍⵎⵖⵔⵉⴱ /'], ['B', 383, 633, 'لمغرب'],
  ['B', 752, 573, 'Algérie /'], ['B', 752, 613, 'ⵍⵣⵣⴰⵢⴻⵔ /'], ['B', 752, 655, 'الجزائر'], ['B', 1050, 382, 'تونس'], ['B', 1322, 682, 'ليبيا'],
  ['B', 337, 883, 'موريتانيا'], ['B', 707, 1005, 'Mali'], ['B', 1070, 1005, 'Niger'], ['B', 228, 1117, 'Sénégal'], ['B', 691, 1173, 'Burkina'], ['B', 691, 1213, 'Faso'],
  ['C', 402, 345, 'Guinée'], ['C', 538, 430, "Côte d'Ivoire"], ['C', 811, 370, 'Bénin'], ['C', 998, 378, 'Nigeria'], ['C', 1197, 433, 'Cameroun'], ['C', 1125, 716, 'Gabon'], ['C', 1279, 710, 'Congo'],
  ['E', 285, 152, 'Tchad تشاد'], ['E', 668, 152, 'السودان'], ['E', 970, 142, 'ኤርትራ Eritrea'], ['E', 972, 182, 'إرتريا'], ['E', 1265, 145, 'اليمن'],
  ['E', 357, 400, 'Ködörösêse'], ['E', 357, 440, 'tî Bêafrîka'], ['E', 357, 480, '- République'], ['E', 357, 520, 'Centrafricaine'], ['E', 646, 416, 'South Sudan'],
  ['E', 983, 373, 'ኢትዮጵያ'], ['E', 1253, 488, 'Soomaaliya'], ['E', 1253, 530, 'الصومال'], ['E', 770, 639, 'Uganda'],
  ['E', 419, 783, 'République'], ['E', 419, 823, 'démocratique'], ['E', 419, 863, 'du Congo'], ['E', 292, 1096, 'Angola'], ['E', 520, 1140, 'Zambia'], ['E', 806, 1141, 'Malawi'],
  ['E', 840, 1333, 'Moçambique'], ['E', 1243, 1318, 'Madagasikara /'], ['E', 1243, 1358, 'Madagascar'], ['E', 488, 1468, 'Botswana'], ['E', 236, 1490, 'Namibia'],
  ['D', 162, 175, 'Ελλάς'], ['D', 621, 166, 'Türkiye'], ['D', 1069, 115, 'Azərbaycan'], ['D', 900, 24, 'საქართველო'], ['D', 723, 349, 'سوريا'], ['D', 863, 413, 'العراق'], ['D', 1261, 450, 'ایران'],
  ['D', 651, 491, 'الأردن'], ['D', 422, 661, 'مصر'], ['D', 924, 764, 'السعودية'], ['D', 1242, 743, 'الإمارات العربية'], ['D', 1242, 783, 'المتحدة'], ['D', 1363, 893, 'عمان'],
  ['F', 160, 169, 'Türkmenistan'], ['F', 315, 61, 'Oʻzbekiston'], ['F', 711, 69, 'Кыргызстан'], ['F', 573, 173, 'Тоҷикистон'], ['F', 378, 384, 'افغانستان'], ['F', 546, 533, 'پاکستان'],
  ['F', 988, 602, 'नेपाल'], ['F', 850, 853, 'India'], ['F', 1224, 787, 'বাংলাদেশ'], ['F', 1412, 960, 'မြန်မာ'],
  ['G', 967, 397, 'ශ්‍රී ලංකාව'], ['G', 967, 438, 'இலங்கை'], ['G', 712, 573, 'ދިވެހިރާއްޖެ'],
];

// [sheet, x, y, text, markerX, markerY, capital]
const CITIES = [
  ['A', 104, 836, 'as'], ['A', 651, 1062, 'Belém', 652, 1080], ['A', 285, 1099, 'Manaus', 285, 1117], ['A', 968, 1142, 'Fortaleza', 968, 1128], ['A', 1084, 1207, 'Recife', 1083, 1224],
  ['A', 968, 1347, 'Salvador', 968, 1333], ['A', 669, 1413, 'Brasília', 669, 1395, 1], ['A', 795, 1473, 'Belo Horizonte', 795, 1490], ['A', 818, 1518, 'Rio de'], ['A', 818, 1543, 'Janeiro', 818, 1560],
  ['A', 181, 1455, 'Santa', 181, 1442], ['A', 181, 1480, 'Cruz de'], ['A', 181, 1505, 'la Sierra'],
  ['B', 807, 37, 'Barcelona', 807, 60], ['B', 499, 269, 'Rabat'], ['B', 499, 309, 'ⵔⴱⴰⵟ'], ['B', 499, 350, 'الرباط', 498, 378, 1], ['B', 836, 295, 'Alger', 837, 261, 1], ['B', 836, 335, 'الجزائر'],
  ['B', 1079, 235, 'تونس', 1079, 261, 1], ['B', 1181, 396, 'طرابلس', 1181, 423, 1], ['B', 187, 1020, 'نواكشوط', 185, 987, 1],
  ['B', 459, 1150, 'Bamako', 459, 1179, 1], ['B', 804, 1119, 'Niamey', 804, 1149, 1], ['B', 1023, 1225, 'Kano', 1022, 1203], ['B', 1245, 1236, "N'Djaména", 1245, 1197, 1],
  ['C', 1246, 346, 'انجمينا'], ['C', 183, 359, 'Conakry', 264, 357, 1], ['C', 363, 498, 'Monrovia', 363, 468, 1], ['C', 595, 534, 'Abidjan', 594, 500], ['C', 725, 524, 'Accra', 726, 494, 1], ['C', 774, 444, 'Lomé', 775, 471, 1],
  ['C', 905, 465, 'Lagos', 848, 462], ['C', 1125, 522, 'Yaoundé', 1125, 552, 1], ['C', 1054, 641, 'Libreville', 1056, 672, 1], ['C', 1254, 862, 'Kinshasa', 1254, 831, 1], ['C', 1183, 1019, 'Luanda', 1185, 987, 1],
  ['E', 1160, 127, 'صنعاء', 1160, 153, 1], ['E', 1157, 288, 'Hargeysa'], ['E', 1160, 329, 'هرجيسا', 1155, 357, 1], ['E', 1200, 647, 'Muqdisho', 1200, 615, 1], ['E', 1200, 689, 'مقديشو'],
  ['E', 908, 760, 'Nairobi', 908, 729, 1], ['E', 678, 782, 'Kigali', 678, 749, 1], ['E', 993, 856, 'Dar es-'], ['E', 993, 894, 'Salaam', 993, 918], ['E', 618, 1188, 'Lusaka', 618, 1218, 1],
  ['D', 143, 69, 'Скопје', 143, 34, 1], ['D', 401, 53, 'İstanbul', 402, 77], ['D', 338, 168, 'İzmir', 338, 192], ['D', 459, 235, 'Antalya', 459, 258], ['D', 857, 115, 'Երևան', 929, 114, 1],
  ['D', 992, 185, 'تبریز', 992, 208], ['D', 914, 267, 'هەولێر', 914, 288], ['D', 962, 345, 'سلێمانی', 963, 315], ['D', 1166, 281, 'تهران', 1166, 309, 1], ['D', 651, 436, 'دمشق', 651, 399, 1],
  ['D', 1112, 437, 'اصفهان', 1176, 432], ['D', 1043, 498, 'البصرة', 1044, 519], ['D', 1206, 534, 'شیراز', 1206, 555], ['D', 1049, 598, 'مدينة الكويت', 1049, 564, 1], ['D', 478, 510, 'القاهرة', 477, 538, 1], ['D', 748, 884, 'جدة', 749, 858],
  ['F', 144, 244, 'Aşgabat', 144, 212, 1], ['F', 513, 397, 'کابل', 512, 356, 1], ['F', 646, 363, 'اسلام آباد', 645, 390, 1], ['F', 688, 503, 'لاہور', 689, 477], ['F', 788, 569, 'Delhi', 788, 594],
  ['F', 739, 690, 'Jaipur', 740, 660], ['F', 915, 687, 'Lucknow', 915, 663], ['F', 1064, 664, 'काठमाडौं', 1065, 630, 1], ['F', 440, 767, 'کراچی', 440, 738], ['F', 207, 788, 'مسقط', 144, 786, 1],
  ['F', 629, 783, 'Ahmedabad', 629, 807], ['F', 861, 799, 'Bhopal', 795, 798], ['F', 640, 976, 'Mumbai', 639, 951], ['F', 830, 989, 'Hyderabad', 831, 1011], ['F', 800, 1194, 'Bengaluru', 801, 1167], ['F', 1432, 1062, 'ရန်ကုန်', 1434, 1032],
];

/* ---------- map ---------- */

const MapFrame = styled.section`
  position: relative;
  height: 800px;
  margin-top: 27px;
  overflow: hidden;
  background: #aad3df;
`;

const MapCanvas = styled.svg`
  display: block;
  width: 100%;
  height: 100%;
  fill: none;
  stroke-linejoin: round;
  stroke-linecap: round;
`;

const PlaceName = styled.text`
  font-family: "Noto Sans", "DejaVu Sans", sans-serif;
  font-size: ${(p) => (p.$country ? '12px' : '11px')};
  text-anchor: middle;
  fill: ${(p) => (p.$country ? '#734a7b' : '#2b2b2b')};
  stroke: rgba(255, 255, 255, 0.6);
  stroke-width: 2px;
  paint-order: stroke;
`;

const Zone = styled.path`
  fill: rgba(85, 85, 85, 0.5);
  stroke: #555555;
  stroke-width: 4px;
`;

const ZoomControl = styled.div`
  position: absolute;
  top: 20px;
  left: 20px;
  display: flex;
  flex-direction: column;
  border: 4px solid rgba(0, 0, 0, 0.2);
  border-radius: 8px;
  background: #ffffff;
  background-clip: padding-box;
`;

const ZoomButton = styled.button`
  display: flex;
  align-items: center;
  justify-content: center;
  width: 60px;
  height: 60px;
  padding: 0 0 4px 2px;
  border: 0;
  border-radius: 4px;
  background: #ffffff;
  cursor: pointer;
  & + & {
    height: 62px;
    border-top: 2px solid #cccccc;
    border-radius: 0 0 4px 4px;
  }
`;

const Attribution = styled.div`
  position: absolute;
  right: 0;
  bottom: 0;
  padding: 0 10px 4px;
  background: rgba(255, 255, 255, 0.7);
  color: #333333;
  font-size: 22px;
  line-height: 30px;
  a { color: #0078a8; text-decoration: none; }
`;

function Names({ list, country }) {
  return list.map(([sheet, x, y, text]) => {
    const [px, py] = place(sheet, x, y);
    return (
      <PlaceName key={text + px} $country={country} x={Math.round(px)} y={Math.round(py + 4)}>
        {text}
      </PlaceName>
    );
  });
}

function Markers() {
  return CITIES.filter((c) => c[4]).map(([sheet, , , text, x, y, capital]) => {
    const [cx, cy] = place(sheet, x, y);
    return (
      <g key={text + cx} stroke="#4a4a40">
        <circle cx={cx} cy={cy} r={capital ? 3 : 1.7} fill="#f5f2e6" strokeWidth={capital ? 1 : 0.8} />
        {capital ? <circle cx={cx} cy={cy} r="1.3" fill="#33332c" stroke="none" /> : null}
      </g>
    );
  });
}

function ZoneMap() {
  return (
    <MapFrame aria-label="Map of timezones">
      <MapCanvas viewBox="32 618 1856 800" preserveAspectRatio="xMidYMid slice">
        <defs>
          <clipPath id="land"><path d={LAND} /></clipPath>
        </defs>
        <path d={LAND} stroke="#9694ba" strokeWidth="7.6" />
        <path d={LAND} stroke="#aad3df" strokeWidth="5.2" />
        <path d={LAND} fill="#f2efe9" />
        <path d={GULF} fill="#aad3df" />
        <g clipPath="url(#land)">
          <path d={PROVINCES} stroke="#d9c7d8" strokeWidth="0.9" />
          <path d={STATE_LINES} stroke="#d2bdd1" strokeWidth="0.9" />
          <path d={COUNTRY_LINES} stroke="#bda3c1" strokeWidth="1.4" />
          <path d={RIVERS} stroke="#b5d9e3" strokeWidth="0.9" />
          <path d={LAKES} fill="#aad3df" />
          <path d={WATER} fill="#aad3df" />
        </g>
        <path d={SEA_LINES} stroke="#9a98bd" strokeWidth="1" />
        {ISLETS.map(([sheet, x, y, r]) => {
          const [cx, cy] = place(sheet, x, y);
          return (
            <ellipse key={`${sheet}${x},${y}`} cx={cx} cy={cy} rx={r} ry={r * 1.1} stroke="#9a98bd" strokeWidth="1" />
          );
        })}
        <Markers />
        <Names list={COUNTRIES} country />
        <Names list={CITIES} />
        {ZONES.map(([name, sheet, outline]) => (
          <Zone key={name} d={toPath(points(sheet, outline), true)} />
        ))}
      </MapCanvas>
      <ZoomControl>
        <ZoomButton type="button" aria-label="Zoom in">
          <svg width="24" height="24" viewBox="0 0 24 24" stroke="#000000" strokeWidth="6"><path d="M0 12H24M12 0V24" /></svg>
        </ZoomButton>
        <ZoomButton type="button" aria-label="Zoom out">
          <svg width="24" height="24" viewBox="0 0 24 24" stroke="#000000" strokeWidth="6"><path d="M0 12H24" /></svg>
        </ZoomButton>
      </ZoomControl>
      <Attribution>
        <a href="#leaflet">Leaflet</a> | © <a href="#osm">OpenStreetMap</a> contributors
      </Attribution>
    </MapFrame>
  );
}

/* ---------- page ---------- */

const Header = styled.header`
  padding: 17px 32px 19px;
  background: #276890;
  color: rgba(255, 255, 244, 0.9);
  a { color: rgba(255, 255, 244, 0.8); text-decoration: none; }
`;

const Main = styled.main`
  padding: 32px;
`;

const Title = styled.h1`
  margin: 0 0 21px;
  padding-left: 20px;
  border-left: 20px solid #ff0000;
  font-size: 64px;
  line-height: 96px;
`;

const Line = styled.p`
  margin: 0;
`;

const Link = styled.a`
  color: #276890;
  text-decoration: ${(p) => (p.$plain ? 'none' : 'underline')};
  font-weight: ${(p) => (p.$strong ? 'bold' : 'normal')};
`;

const RowCount = styled.h3`
  margin: 33px 0 10px;
  font-size: 40px;
  line-height: 60px;
`;

const Filters = styled.form`
  display: flex;
  flex-direction: column;
  align-items: flex-start;
  gap: 14px;
  margin-bottom: 13px;
`;

const FilterRow = styled.div`
  display: flex;
  gap: 8px;
`;

const SelectBox = styled.label`
  position: relative;
  display: block;
  width: ${(p) => p.$width}px;
  &::after {
    content: '▼';
    position: absolute;
    top: 14px;
    right: 14px;
    color: #bbbbbb;
    font-family: "DejaVu Sans", sans-serif;
    font-size: 22px;
    line-height: 28px;
    pointer-events: none;
  }
`;

const Select = styled.select`
  appearance: none;
  width: 100%;
  height: 70px;
  padding: 0 16px;
  border: 2px solid #cccccc;
  border-radius: 6px;
  background: #fafafa;
  color: #000000;
  font: 26px "Liberation Sans", Arial, sans-serif;
`;

const ValueInput = styled.input`
  width: 420px;
  height: 70px;
  padding: 0 16px;
  border: 2px solid #cccccc;
  border-radius: 6px;
  background: #ffffff;
  font: 32px "Liberation Sans", Arial, sans-serif;
`;

const ApplyButton = styled.button`
  height: 62px;
  padding: 0 24px 6px;
  border: 0;
  border-radius: 8px;
  background: #007bff;
  color: #ffffff;
  font: 29px "Liberation Sans", Arial, sans-serif;
`;

const Table = styled.table`
  margin-top: 33px;
  border-collapse: separate;
  border-spacing: 0;
`;

const HeadCell = styled.th`
  padding: 0 32px 3px 0;
  text-align: left;
  font-weight: normal;
  white-space: nowrap;
`;

const HeadInner = styled.span`
  display: flex;
  align-items: center;
  gap: 10px;
`;

const Cell = styled.td`
  height: 66px;
  padding: 5px 8px 11px;
  border-top: 2px solid #aaaaaa;
  border-right: 2px solid #eeeeee;
  white-space: nowrap;
`;

const BlobInner = styled.span`
  display: flex;
  align-items: flex-end;
  gap: 9px;
  svg { margin-bottom: 6px; }
`;

const Gear = () => (
  <svg width="28" height="28" viewBox="0 0 24 24" fill="none" stroke="#44495f" strokeWidth="2" strokeLinecap="round" strokeLinejoin="round" aria-hidden="true">
    <circle cx="12" cy="12" r="3" />
    <path d="M19.4 15a1.65 1.65 0 0 0 .33 1.82l.06.06a2 2 0 0 1 0 2.83 2 2 0 0 1-2.83 0l-.06-.06a1.65 1.65 0 0 0-1.82-.33 1.65 1.65 0 0 0-1 1.51V21a2 2 0 0 1-2 2 2 2 0 0 1-2-2v-.09A1.65 1.65 0 0 0 9 19.4a1.65 1.65 0 0 0-1.82.33l-.06.06a2 2 0 0 1-2.83 0 2 2 0 0 1 0-2.83l.06-.06a1.65 1.65 0 0 0 .33-1.82 1.65 1.65 0 0 0-1.51-1H3a2 2 0 0 1-2-2 2 2 0 0 1 2-2h.09A1.65 1.65 0 0 0 4.6 9a1.65 1.65 0 0 0-.33-1.82l-.06-.06a2 2 0 0 1 0-2.83 2 2 0 0 1 2.83 0l.06.06a1.65 1.65 0 0 0 1.82.33H9a1.65 1.65 0 0 0 1-1.51V3a2 2 0 0 1 2-2 2 2 0 0 1 2 2v.09a1.65 1.65 0 0 0 1 1.51 1.65 1.65 0 0 0 1.82-.33l.06-.06a2 2 0 0 1 2.83 0 2 2 0 0 1 0 2.83l-.06.06a1.65 1.65 0 0 0-.33 1.82V9a1.65 1.65 0 0 0 1.51 1H21a2 2 0 0 1 2 2 2 2 0 0 1-2 2h-.09a1.65 1.65 0 0 0-1.51 1z" />
  </svg>
);

const Download = () => (
  <svg width="32" height="32" viewBox="0 0 32 32" fill="none" stroke="#000000" strokeWidth="3" strokeLinecap="round" strokeLinejoin="round" aria-hidden="true">
    <path d="M17 4V22M9 15L17 23L25 15M8 29H26" />
  </svg>
);

const ROWS = [
  ['Africa/Abidjan', '412,740'],
  ['Africa/Accra', '340,884'],
  ['Africa/Addis_Ababa', '379,396'],
  ['Africa/Algiers', '192,948'],
  ['Africa/Asmara', '123,880'],
  ['Africa/Bamako', '471,460'],
  ['Africa/Bangui', '520,436'],
];

export default function App() {
  return (
    <>
      <GlobalStyle />
      <Header>
        <a href="#home">home</a> / <a href="#timezones">timezones</a>
      </Header>
      <Main>
        <Title>timezones</Title>
        <Line>
          Data license: <Link href="#odbl">ODbL</Link> · Data source:{' '}
          <Link href="#builder">timezone-boundary-builder</Link> · About:{' '}
          <Link href="#api">simonw/timezones-api</Link>
        </Line>
        <RowCount>445 rows</RowCount>
        <Filters onSubmit={(e) => e.preventDefault()}>
          <FilterRow>
            <SelectBox $width={240}>
              <Select aria-label="Column" defaultValue="">
                <option value="">- column -</option>
                <option>id</option>
                <option>tzid</option>
                <option>geometry</option>
              </Select>
            </SelectBox>
            <SelectBox $width={160}>
              <Select aria-label="Operator">
                <option>=</option>
                <option>!=</option>
              </Select>
            </SelectBox>
            <ValueInput type="text" aria-label="Filter value" />
          </FilterRow>
          <ApplyButton type="submit">Apply</ApplyButton>
        </Filters>
        <Line>
          This data as <Link href="#json">json</Link>, <Link href="#geojson">geojson</Link>,{' '}
          <Link href="#csv">CSV</Link> (<Link href="#advanced">advanced</Link>)
        </Line>
        <ZoneMap />
        <Table>
          <thead>
            <tr>
              <HeadCell scope="col"><HeadInner><Link $plain href="#id">id ▼</Link><Gear /></HeadInner></HeadCell>
              <HeadCell scope="col"><HeadInner><Link $plain href="#tzid">tzid</Link><Gear /></HeadInner></HeadCell>
              <HeadCell scope="col"><HeadInner><Link $plain href="#geometry">geometry</Link><Gear /></HeadInner></HeadCell>
            </tr>
          </thead>
          <tbody>
            {ROWS.map(([tzid, bytes], id) => (
              <tr key={tzid}>
                <Cell><Link $plain $strong href={`#row-${id}`}>{id}</Link></Cell>
                <Cell>{tzid}</Cell>
                <Cell>
                  <BlobInner>
                    <Link $plain href={`#blob-${id}`}>&lt;Binary: {bytes} bytes&gt;</Link>
                    <Download />
                  </BlobInner>
                </Cell>
              </tr>
            ))}
          </tbody>
        </Table>
      </Main>
    </>
  );
}
